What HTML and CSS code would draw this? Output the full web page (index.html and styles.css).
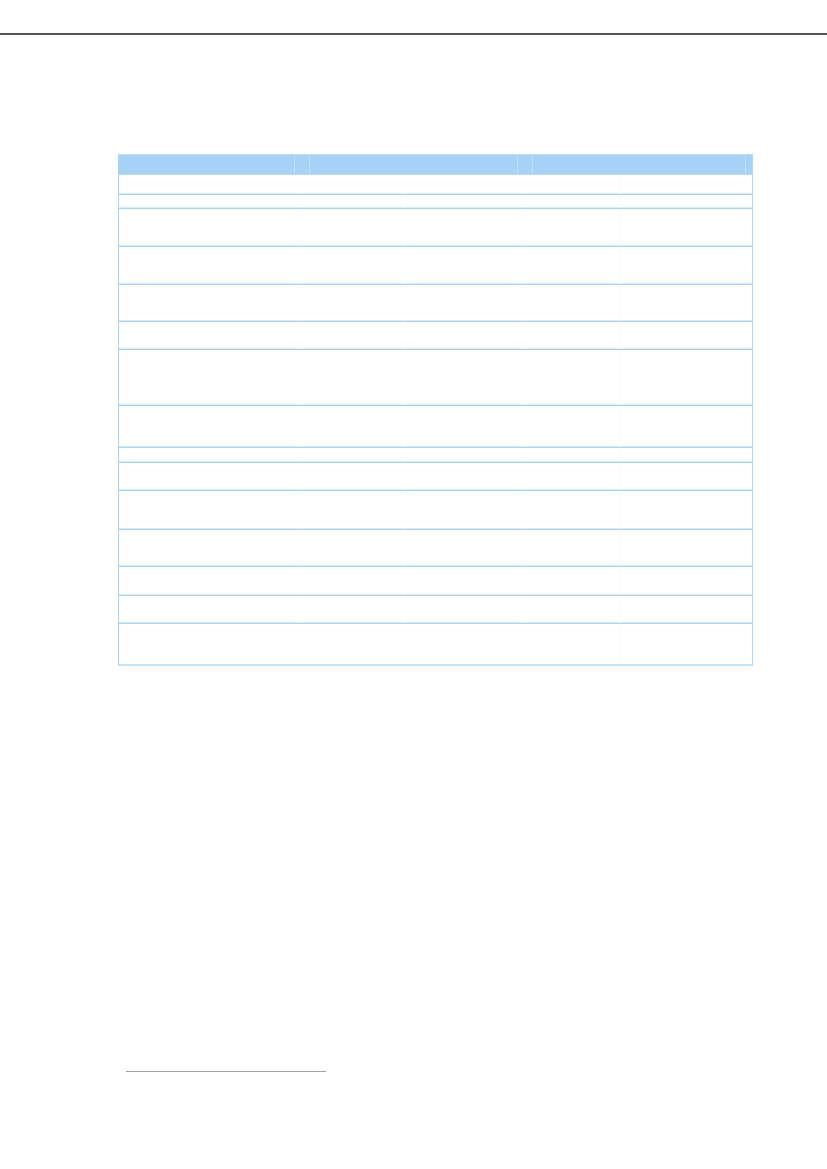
FILE: index.html
```html
<!DOCTYPE html>
<html lang="en">
<head>
<meta charset="utf-8">
<title>Page</title>
<link rel="stylesheet" href="styles.css">
</head>
<body>
<div class="page">
  <div class="top-rule"></div>
  <div class="table">
    <div class="thead">
      <div class="th w175"></div>
      <div class="th w15"></div>
      <div class="th w208"></div>
      <div class="th w15"></div>
      <div class="th w213"></div>
      <div class="th w7"></div>
    </div>
    <div class="row h20"><div></div><div></div><div></div><div></div><div></div></div>
    <div class="row h14"><div></div><div></div><div></div><div></div><div></div></div>
    <div class="row h38"><div></div><div></div><div></div><div></div><div></div></div>
    <div class="row h38"><div></div><div></div><div></div><div></div><div></div></div>
    <div class="row h37"><div></div><div></div><div></div><div></div><div></div></div>
    <div class="row h28"><div></div><div></div><div></div><div></div><div></div></div>
    <div class="row h56"><div></div><div></div><div></div><div></div><div></div></div>
    <div class="row h42"><div></div><div></div><div></div><div></div><div></div></div>
    <div class="row h15"><div></div><div></div><div></div><div></div><div></div></div>
    <div class="row h28"><div></div><div></div><div></div><div></div><div></div></div>
    <div class="row h39"><div></div><div></div><div></div><div></div><div></div></div>
    <div class="row h37"><div></div><div></div><div></div><div></div><div></div></div>
    <div class="row h29"><div></div><div></div><div></div><div></div><div></div></div>
    <div class="row h28"><div></div><div></div><div></div><div></div><div></div></div>
    <div class="row h42 last"><div></div><div></div><div></div><div></div><div></div></div>
  </div>
  <div class="footnote-rule"></div>
</div>
</body>
</html>
```
FILE: styles.css
```css
html, body {
  margin: 0;
  padding: 0;
  background: #ffffff;
  font-family: "Liberation Serif", serif;
}
.page {
  width: 827px;
  height: 1169px;
  overflow: hidden;
  padding-top: 33px;
  box-sizing: border-box;
}
.top-rule {
  height: 2px;
  background: #555555;
}
.table {
  margin-top: 119px;
  margin-left: 118px;
  width: 635px;
  box-sizing: border-box;
  border-left: 1px solid #a9d5f6;
  border-right: 1px solid #b3daf7;
}
.thead {
  display: flex;
  height: 21px;
  box-sizing: border-box;
  background: #a6d3f5;
  border-top: 1px solid #c0e1f8;
  border-bottom: 1px solid #b8dcf7;
}
.th {
  height: 100%;
  box-sizing: border-box;
}
.th + .th {
  border-left: 1px solid #bcdef8;
}
.w175 { width: 175px; }
.w15 { width: 15px; }
.w208 { width: 208px; }
.w213 { width: 213px; }
.w7 { width: 7px; }
.row {
  display: grid;
  grid-template-columns: 182px 103px 121px 94px 133px;
  box-sizing: border-box;
  border-bottom: 1px solid #a9d5f6;
  box-shadow: inset 0 -1px 0 #d6ebfb;
}
.row > div + div {
  border-left: 1px solid #fafcff;
}
.row > div:nth-child(3) {
  border-left-color: #ffffff;
}
.row.last {
  border-bottom: 2px solid #c6e3f9;
  box-shadow: none;
}
.h14 { height: 14px; }
.h15 { height: 15px; }
.h20 { height: 20px; }
.h28 { height: 28px; }
.h29 { height: 29px; }
.h37 { height: 37px; }
.h38 { height: 38px; }
.h39 { height: 39px; }
.h42 { height: 42px; }
.h56 { height: 56px; }
.footnote-rule {
  margin-top: 405px;
  margin-left: 126px;
  width: 200px;
  height: 1px;
  background: #a0a0a0;
}
```
